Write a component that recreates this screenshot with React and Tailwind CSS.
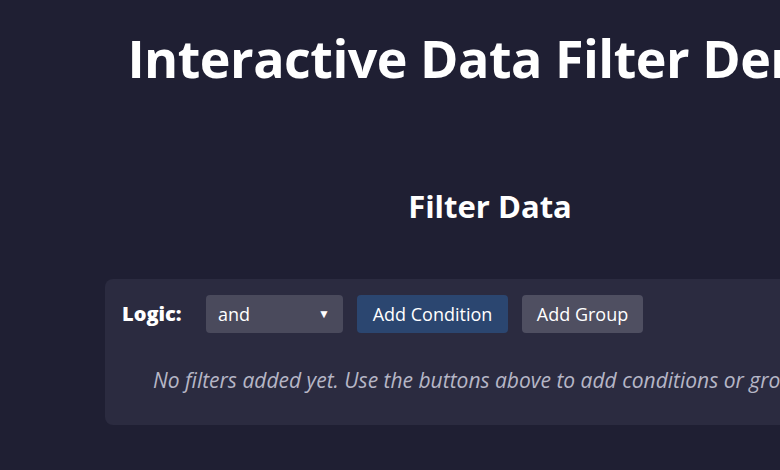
import React from 'react'

const App = () => {
  return (
    <div className="w-[780px] h-[470px] overflow-hidden bg-[#1f1f33] text-white" style={{ fontFamily: '"Open Sans", "Noto Sans", sans-serif' }}>
      <div className="w-[980px] flex flex-col items-center">
        <h1 className="mt-[22px] text-[52px] leading-[72px] font-bold tracking-[-0.5px] whitespace-nowrap">
          Interactive Data Filter Demo
        </h1>

        <h2 className="mt-[91px] text-[31px] leading-[42px] font-bold">Filter Data</h2>

        <div className="mt-[52px] w-[770px] bg-[#2b2b40] rounded-lg px-[17px] pt-[16px] pb-[31px]">
          <div className="flex items-center gap-[14px]">
            <span className="w-[70px] text-[20px] font-extrabold">Logic:</span>
            <div className="w-[137px] h-[38px] bg-[#4a4a5c] rounded flex items-center justify-between pl-[12px] pr-[13px] text-[18px]">
              <span>and</span>
              <span className="text-[12px]">▼</span>
            </div>
            <button className="w-[151px] h-[38px] bg-[#2b4670] rounded text-[18px]">Add Condition</button>
            <button className="w-[121px] h-[38px] bg-[#4f4f61] rounded text-[18px]">Add Group</button>
          </div>
          <p className="mt-[33px] pl-[31px] text-[21px] leading-[28px] italic text-[#b6b6c6] whitespace-nowrap">
            No filters added yet. Use the buttons above to add conditions or groups.
          </p>
        </div>
      </div>
    </div>
  )
}

export default App
